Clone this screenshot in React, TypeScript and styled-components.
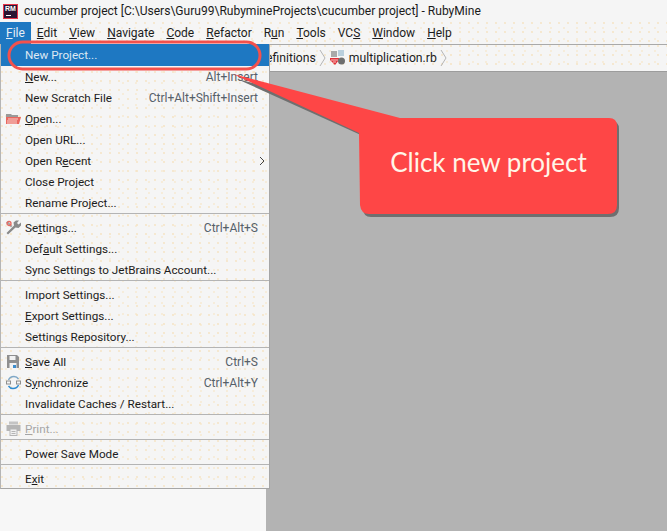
import React from 'react';
import styled, { createGlobalStyle } from 'styled-components';

const GlobalStyle = createGlobalStyle`
  html, body {
    margin: 0;
    padding: 0;
    background: #f5f5f5;
  }
  body {
    font-family: 'Roboto', 'Noto Sans', 'Liberation Sans', sans-serif;
    font-size: 12px;
    color: #1c1c1c;
  }
`;

const dots = `
  background-image:
    radial-gradient(circle at 1px 1px, #f6e4c4 0.6px, transparent 1px),
    radial-gradient(circle at 5px 6px, #f7ead2 0.6px, transparent 1px);
  background-size: 9px 9px, 13px 11px;
`;

// Window chrome
const Page = styled.div`
  position: relative;
  width: 667px;
  height: 531px;
  overflow: hidden;
  display: flex;
  flex-direction: column;
  background: #f5f5f5;
`;

const TitleBar = styled.div`
  height: 22px;
  display: flex;
  align-items: center;
  padding-left: 3px;
  gap: 6px;
  font-size: 12.05px;
  color: #1a1a1a;
  white-space: nowrap;
`;

const Logo = styled.div`
  position: relative;
  width: 15px;
  height: 15px;
  flex: none;
  box-sizing: border-box;
  background: #2b1533;
  border: 1px solid #e8344a;
  color: #fff;
  font-size: 7px;
  font-weight: 700;
  line-height: 8px;
  padding-left: 1px;
  letter-spacing: 0;
  font-family: 'Liberation Sans', sans-serif;
  overflow: hidden;
  &::after {
    content: '';
    position: absolute;
    left: 2px;
    bottom: 2px;
    width: 5px;
    height: 1px;
    background: #fff;
  }
`;

const MenuBar = styled.div`
  height: 22px;
  display: flex;
  align-items: center;
  border-bottom: 1px solid #a9a9a9;
  ${dots}
`;

const MenuItem = styled.div<{ $active?: boolean }>`
  height: 22px;
  line-height: 22px;
  padding: 0 6px;
  font-size: 12px;
  background: ${(p) => (p.$active ? '#1e78c2' : 'transparent')};
  color: ${(p) => (p.$active ? '#e8eef5' : '#1c1c1c')};
`;

const Breadcrumbs = styled.div`
  height: 26px;
  display: flex;
  align-items: center;
  justify-content: flex-start;
  padding-left: 266px;
  gap: 3px;
  border-bottom: 1px solid #9c9c9c;
  font-size: 12.2px;
  white-space: nowrap;
  ${dots}
`;

const Body = styled.div`
  flex: 1;
  display: flex;
`;

const Sidebar = styled.div`
  width: 266px;
  background: #f7f7f7;
`;

const Editor = styled.div`
  flex: 1;
  background: #b3b3b3;
`;

// File menu
const Menu = styled.div`
  position: absolute;
  left: 0;
  top: 44px;
  width: 270px;
  height: 445px;
  box-sizing: border-box;
  background-color: #f5f5f5;
  border: 1px solid #a6a6a6;
  border-top: none;
  border-left-color: #b5b5b5;
  ${dots}
`;

const Row = styled.div<{ $selected?: boolean; $disabled?: boolean }>`
  height: ${(p) => (p.$selected ? 22 : 21)}px;
  display: flex;
  align-items: center;
  padding: 0 11px 0 24px;
  position: relative;
  font-size: 11.7px;
  background: ${(p) => (p.$selected ? '#1e78c2' : 'transparent')};
  color: ${(p) => (p.$selected ? '#dfe9f3' : p.$disabled ? '#a5a5a5' : '#1c1c1c')};
`;

const Label = styled.span`
  flex: 1;
  white-space: nowrap;
`;

const Shortcut = styled.span`
  color: #55606a;
  font-size: 12px;
  white-space: nowrap;
`;

const Separator = styled.div`
  height: 1px;
  background: #b4b4b4;
  margin: 0 0 3px;
`;

const RowIcon = styled.svg`
  position: absolute;
  left: 5px;
  top: 3px;
  width: 15px;
  height: 15px;
`;

const Chevron = styled.svg`
  width: 6px;
  height: 10px;
  margin-right: -7px;
`;

// Annotation drawn over the screenshot
const Overlay = styled.svg`
  position: absolute;
  left: 0;
  top: 0;
  pointer-events: none;
`;

const CalloutText = styled.div`
  position: absolute;
  left: 360px;
  top: 142px;
  width: 257px;
  text-align: center;
  color: #fff5e8;
  font-family: 'Lato', sans-serif;
  font-size: 26px;
  line-height: 40px;
  white-space: nowrap;
`;

const Mark: React.FC<{ children: string }> = ({ children }) => <u>{children}</u>;

const FolderIcon = () => (
  <RowIcon viewBox="0 0 15 15">
    <path d="M0 3h5l1 1h6v2H0z" fill="#9a9a9a" />
    <path d="M0 6h15l-2 7H0z" fill="#e9675f" />
    <path d="M2 8h10M1 10h10M1 12h10" stroke="#f7d4d0" strokeWidth="1" />
  </RowIcon>
);

const WrenchIcon = () => (
  <RowIcon viewBox="0 0 15 15">
    <path d="M2 14.500L0.500 13 8 5.500l-.5-3L10 .5h3l-2 2.500 1.500 1.500L15 2.500v3L12.500 8l-3-.5z" fill="#8a8a8a" />
    <path d="M1.500 1L6.500 6l-1.500 1.500L0 2.500z" fill="#a5a5a5" />
    <circle cx="3" cy="3.500" r="2" fill="none" stroke="#e8675f" strokeWidth="1.300" />
  </RowIcon>
);

const SaveIcon = () => (
  <RowIcon viewBox="0 0 15 15">
    <path d="M1 1h10l2 2v11H1z" fill="#8f8f8f" />
    <rect x="3.500" y="2" width="6" height="4" fill="#f2f2f2" />
    <rect x="3.500" y="9" width="7" height="5" fill="#f2f2f2" />
    <rect x="7" y="11" width="3" height="3" fill="#3c8ccb" />
  </RowIcon>
);

const SyncIcon = () => (
  <RowIcon viewBox="0 0 15 15">
    <path d="M2.500 5C3.500 2.500 6 1.500 8 1.500c2.500 0 3.500 1 4.500 2.500" fill="none" stroke="#7fa7c6" strokeWidth="1.400" />
    <path d="M12.500 10c-1 2.500-3.500 3.500-5.500 3.500-2.500 0-3.500-1-4.500-2.500" fill="none" stroke="#2f8bd0" strokeWidth="1.400" />
    <rect x="0.500" y="6" width="4" height="3" fill="none" stroke="#8f8f8f" />
    <rect x="10.500" y="6" width="4" height="3" fill="none" stroke="#8f8f8f" />
  </RowIcon>
);

const PrintIcon = () => (
  <RowIcon viewBox="0 0 15 15">
    <rect x="3" y="0.500" width="9" height="3" fill="#c4c4c4" />
    <rect x="0.500" y="4" width="14" height="6" fill="#b5b5b5" />
    <rect x="4" y="8" width="7" height="6.500" fill="#f0f0f0" stroke="#b5b5b5" />
    <path d="M5.500 10.500h4M5.500 12.500h4" stroke="#b5b5b5" />
  </RowIcon>
);

const RubyFileIcon = () => (
  <svg width="16" height="16" viewBox="0 0 16 16">
    <rect x="1" y="1" width="6" height="6" fill="#a9a9a9" />
    <rect x="8" y="0" width="6" height="6" fill="#b9cfdd" />
    <path d="M0 8h9v2l-4 5-5-5z" fill="#e0323a" />
    <path d="M1 10h7M3 12h3" stroke="#f7c3c3" />
    <circle cx="11.500" cy="11" r="3.500" fill="#6e6e6e" />
  </svg>
);

const App: React.FC = () => (
  <Page>
    <GlobalStyle />
    <TitleBar>
      <Logo>RM</Logo>
      cucumber project [C:\Users\Guru99\RubymineProjects\cucumber project] - RubyMine
    </TitleBar>
    <MenuBar>
      <MenuItem $active><Mark>F</Mark>ile</MenuItem>
      <MenuItem><Mark>E</Mark>dit</MenuItem>
      <MenuItem><Mark>V</Mark>iew</MenuItem>
      <MenuItem><Mark>N</Mark>avigate</MenuItem>
      <MenuItem><Mark>C</Mark>ode</MenuItem>
      <MenuItem><Mark>R</Mark>efactor</MenuItem>
      <MenuItem>R<Mark>u</Mark>n</MenuItem>
      <MenuItem><Mark>T</Mark>ools</MenuItem>
      <MenuItem>VC<Mark>S</Mark></MenuItem>
      <MenuItem><Mark>W</Mark>indow</MenuItem>
      <MenuItem><Mark>H</Mark>elp</MenuItem>
    </MenuBar>
    <Breadcrumbs>
      efinitions
      <svg width="8" height="18" viewBox="0 0 8 18"><path d="M1 1l5 8-5 8" fill="none" stroke="#b5b5b5" /></svg>
      <RubyFileIcon />
      multiplication.rb
      <svg width="8" height="18" viewBox="0 0 8 18"><path d="M1 1l5 8-5 8" fill="none" stroke="#b5b5b5" /></svg>
    </Breadcrumbs>
    <Body>
      <Sidebar />
      <Editor />
    </Body>

    <Menu>
      <Row $selected><Label>New Project...</Label></Row>
      <Row><Label><Mark>N</Mark>ew...</Label><Shortcut>Alt+Insert</Shortcut></Row>
      <Row><Label>New Scratch File</Label><Shortcut>Ctrl+Alt+Shift+Insert</Shortcut></Row>
      <Row><FolderIcon /><Label><Mark>O</Mark>pen...</Label></Row>
      <Row><Label>Open URL...</Label></Row>
      <Row>
        <Label>Open R<Mark>e</Mark>cent</Label>
        <Chevron viewBox="0 0 6 10"><path d="M1 1l4 4-4 4" fill="none" stroke="#444" /></Chevron>
      </Row>
      <Row><Label>Close Project</Label></Row>
      <Row><Label>Rename Project...</Label></Row>
      <Separator />
      <Row><WrenchIcon /><Label>Se<Mark>t</Mark>tings...</Label><Shortcut>Ctrl+Alt+S</Shortcut></Row>
      <Row><Label>Def<Mark>a</Mark>ult Settings...</Label></Row>
      <Row><Label>Sync Settings to JetBrains Account...</Label></Row>
      <Separator />
      <Row><Label>Import Settings...</Label></Row>
      <Row><Label><Mark>E</Mark>xport Settings...</Label></Row>
      <Row><Label>Settings Repository...</Label></Row>
      <Separator />
      <Row><SaveIcon /><Label><Mark>S</Mark>ave All</Label><Shortcut>Ctrl+S</Shortcut></Row>
      <Row><SyncIcon /><Label>S<Mark>y</Mark>nchronize</Label><Shortcut>Ctrl+Alt+Y</Shortcut></Row>
      <Row><Label>Invalidate Caches / Restart...</Label></Row>
      <Separator />
      <Row $disabled><PrintIcon /><Label><Mark>P</Mark>rint...</Label></Row>
      <Separator />
      <Row><Label>Power Save Mode</Label></Row>
      <Separator />
      <Row><Label>E<Mark>x</Mark>it</Label></Row>
    </Menu>

    <Overlay width="667" height="531" viewBox="0 0 667 531">
      <path
        d="M235 76 L400 118 H609 Q617 118 617 126 V205 Q617 214 608 214 H369 Q361 214 361 205 V133 Z"
        fill="#6f6f6f"
        transform="translate(2 3)"
      />
      <path
        d="M233 74 L400 118 H609 Q617 118 617 126 V205 Q617 214 608 214 H369 Q361 214 360 205 L359 133 Z"
        fill="#fe4646"
      />
      <rect x="9" y="42" width="251" height="27" rx="13.500" fill="none" stroke="#f4514c" strokeWidth="3" />
    </Overlay>
    <CalloutText>Click new project</CalloutText>
  </Page>
);

export default App;
